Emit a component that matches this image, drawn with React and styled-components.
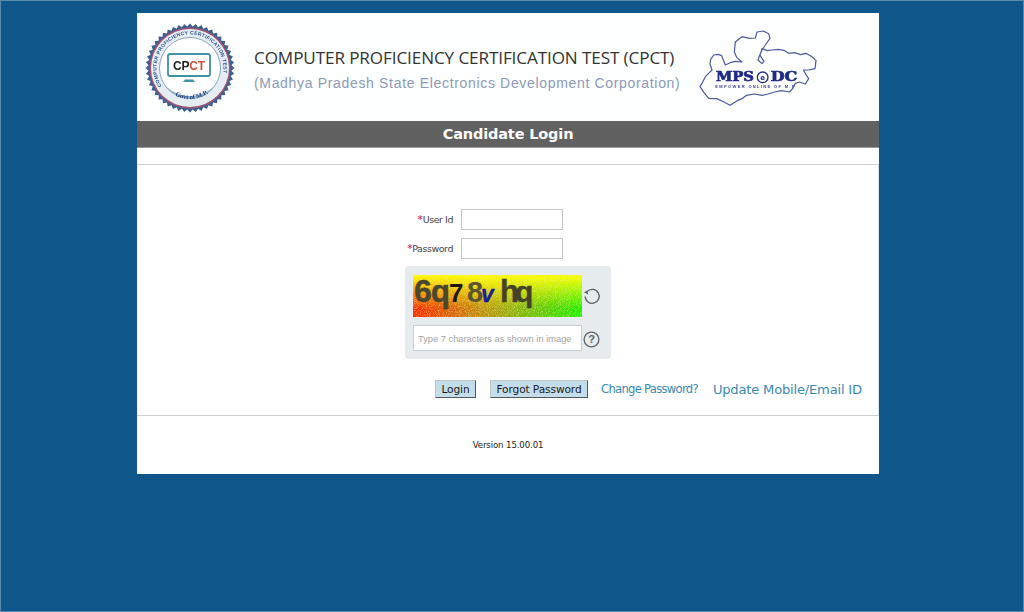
import React from 'react';
import styled, { createGlobalStyle } from 'styled-components';

const GlobalStyle = createGlobalStyle`
    html, body {
        margin: 0;
        padding: 0;
        background: #0f568a;
    }
`;

const Page = styled.div`
    box-sizing: border-box;
    width: 1024px;
    height: 612px;
    padding: 12px 0 0 136px;
    background: #0f568a;
    border: 1px solid #5a8bae;
    overflow: hidden;
`;

const Card = styled.div`
    width: 742px;
    height: 461px;
    background: #fff;
    display: flex;
    flex-direction: column;
`;

const Header = styled.div`
    height: 108px;
    display: flex;
    align-items: flex-start;
    background: #fdfefe;
`;

const SealBox = styled.div`
    box-sizing: border-box;
    width: 117px;
    padding: 10px 0 0 8px;
    filter: blur(0.35px);
`;

const TitleBlock = styled.div`
    width: 426px;
    padding-top: 33px;
`;

const Title = styled.div`
    font-family: "Open Sans", sans-serif;
    font-size: 17.1px;
    line-height: 24px;
    color: #333;
    white-space: nowrap;
    letter-spacing: -0.1px;
`;

const Subtitle = styled.div`
    font-family: "Liberation Sans", sans-serif;
    font-size: 14px;
    line-height: 24px;
    margin-top: 1px;
    color: #8c9ab8;
    white-space: nowrap;
    letter-spacing: 0.67px;
`;

const MapBox = styled.div`
    margin-top: 7px;
    filter: blur(0.35px);
`;

const Band = styled.div`
    height: 27px;
    background: #616161;
    color: #fff;
    font-family: "DejaVu Sans", sans-serif;
    font-weight: 700;
    font-size: 14.5px;
    letter-spacing: -0.15px;
    line-height: 27px;
    text-align: center;
    border-bottom: 1px solid #9a9a9a;
    box-sizing: border-box;
`;

const Divider = styled.div`
    height: ${p => p.$h}px;
    border-bottom: 1px solid #cfd2d2;
    box-sizing: border-box;
`;

const Body = styled.div`
    height: 251px;
    box-sizing: border-box;
    padding-top: 44px;
    border-bottom: 1px solid #cfd2d2;
    border-right: 1px solid #dfe6ea;
`;

const Fields = styled.div`
    display: grid;
    grid-template-columns: 316px 102px;
    column-gap: 8px;
    row-gap: 8px;
    align-items: center;
`;

const Label = styled.label`
    font-family: "DejaVu Sans", sans-serif;
    font-size: 9.5px;
    color: #444;
    text-align: right;
    letter-spacing: -0.45px;
`;

const Star = styled.span`
    color: #c8102e;
    font-size: 11px;
`;

const TextBox = styled.input`
    box-sizing: border-box;
    width: 102px;
    height: 21px;
    border: 1px solid #c3c6c8;
    background: #fff;
    padding: 0 4px;
    outline: none;
`;

const CaptchaPanel = styled.div`
    box-sizing: border-box;
    width: 206px;
    height: 93px;
    margin: 7px 0 0 268px;
    padding: 9px 8px;
    background: #e6ebee;
    border-radius: 4px;
    display: grid;
    grid-template-columns: 169px 22px;
    column-gap: 0;
    row-gap: 8px;
    align-items: center;
`;

const CaptchaField = styled.input`
    box-sizing: border-box;
    width: 169px;
    height: 26px;
    border: 1px solid #c9ced2;
    background: #fff;
    padding: 1px 4px 0;
    font-family: "Liberation Sans", sans-serif;
    font-size: 9.3px;
    outline: none;
    &::placeholder {
        color: #a3a3a3;
        opacity: 1;
    }
`;

const IconCell = styled.div`
    display: flex;
    justify-content: flex-end;
    padding: ${p => p.$top}px ${p => p.$right}px 0 0;
`;

const Actions = styled.div`
    display: flex;
    align-items: center;
    margin: 21px 0 0 298px;
`;

const ActionButton = styled.button`
    box-sizing: border-box;
    height: 18px;
    width: ${p => p.$w}px;
    margin-right: ${p => p.$gap}px;
    padding: 0;
    background: #c3deea;
    border: 1px solid;
    border-color: #c2c6c8 #55595c #55595c #c2c6c8;
    font-family: "DejaVu Sans", sans-serif;
    font-size: 10.6px;
    color: #1a1a1a;
    letter-spacing: -0.1px;
`;

const SmallLink = styled.a`
    font-family: "DejaVu Sans", sans-serif;
    font-size: 11.6px;
    letter-spacing: -0.72px;
    color: #3a8ab4;
    margin-right: 15px;
    white-space: nowrap;
`;

const BigLink = styled.a`
    font-family: "DejaVu Sans", sans-serif;
    font-size: 13.1px;
    letter-spacing: -0.2px;
    color: #3a8ab4;
    white-space: nowrap;
`;

const Footer = styled.div`
    flex: 1;
    display: flex;
    justify-content: center;
    padding-top: 24px;
    font-family: "DejaVu Sans", sans-serif;
    font-size: 8.6px;
    letter-spacing: -0.12px;
    color: #222;
    box-sizing: border-box;
`;

// toothed rim of the round seal
const gearPoints = (cx, cy, outer, inner, teeth) => {
    const pts = [];
    for (let i = 0; i < teeth * 2; i++) {
        const r = i % 2 === 0 ? outer : inner;
        const a = (i * Math.PI) / teeth;
        pts.push(`${(cx + r * Math.cos(a)).toFixed(2)},${(cy + r * Math.sin(a)).toFixed(2)}`);
    }
    return pts.join(' ');
};

const Seal = () => (
    <svg width="90" height="90" viewBox="0 0 90 90" style={{ display: 'block' }}>
        <defs>
            <path id="sealTop" d="M 17.6 64.2 A 33.5 33.5 0 1 1 72.4 64.2" />
            <path id="sealBottom" d="M 24 68 A 31 31 0 0 0 66 68" />
        </defs>
        <polygon points={gearPoints(45, 45, 44.5, 41.5, 48)} fill="#3f5f92" />
        <circle cx="45" cy="45" r="40.5" fill="#9c5570" />
        <circle cx="45" cy="45" r="39" fill="#e6edf2" />
        <circle cx="45" cy="45" r="30.5" fill="#fff" stroke="#6f93b2" strokeWidth="0.8" />
        <path d="M 20 63 A 31 31 0 0 0 70 63 L 63 68 Q 45 78 27 68 Z" fill="#8fb0cf" />
        <text fontFamily="'Liberation Sans', sans-serif" fontWeight="700" fontSize="4.9" fill="#274f8c" letterSpacing="0.35">
            <textPath href="#sealTop" startOffset="1%">COMPUTER PROFICIENCY CERTIFICATION TEST</textPath>
        </text>
        <text fontFamily="'Liberation Serif', serif" fontWeight="700" fontSize="6.5" fill="#1d3f78">
            <textPath href="#sealBottom" startOffset="16%" side="left">Govt of M.P.</textPath>
        </text>
        <rect x="23" y="31" width="42" height="22" rx="2" fill="#fff" stroke="#3f93a6" strokeWidth="1.8" />
        <text x="44" y="46.5" textAnchor="middle" fontFamily="'Liberation Sans', sans-serif" fontWeight="700" fontSize="12" letterSpacing="-0.2">
            <tspan fill="#222">CP</tspan><tspan fill="#c8503c">CT</tspan>
        </text>
        <path d="M 40 56.5 L 48 56.5 L 50 59 L 38 59 Z" fill="#3f93a6" />
    </svg>
);

const MpLogo = () => (
    <svg width="150" height="100" viewBox="0 0 450 300" style={{ display: 'block' }}>
        <path
            d="M60 200 L68 186 L76 170 L88 158 L96 150 L90 132 L92 118 L101 105 L114 103 L125 107 L131 122 L136 135 L150 128 L166 124 L186 126 L170 112 L163 96 L166 66 L178 56 L186 50 L208 55 L226 54 L231 36 L250 33 L266 41 L270 55 L258 72 L246 90 L238 108 L234 120 L246 131 L252 124 L240 106 L246 86 L262 92 L276 90 L294 88 L312 91 L326 100 L344 98 L362 104 L378 100 L396 110 L408 122 L405 146 L386 150 L370 150 L378 164 L386 176 L376 192 L358 186 L346 190 L338 206 L328 216 L304 212 L284 216 L264 222 L246 226 L222 222 L200 226 L186 236 L172 242 L150 256 L132 246 L110 236 L86 235 L72 218 Z"
            fill="none"
            stroke="#4d5aa0"
            strokeWidth="3.6"
            strokeLinejoin="round"
        />
        <text x="108" y="184" textLength="114" lengthAdjust="spacingAndGlyphs" fontFamily="'DejaVu Serif', serif" fontWeight="700" fontSize="38" fill="#1f2a86" stroke="#1f2a86" strokeWidth="2">MPS</text>
        <circle cx="248" cy="172" r="16" fill="#fff" stroke="#1f2a86" strokeWidth="4" />
        <text x="248" y="180" textAnchor="middle" fontFamily="'DejaVu Sans', sans-serif" fontWeight="700" fontSize="21" fill="#1f2a86">e</text>
        <text x="272" y="184" textLength="80" lengthAdjust="spacingAndGlyphs" fontFamily="'DejaVu Serif', serif" fontWeight="700" fontSize="38" fill="#1f2a86" stroke="#1f2a86" strokeWidth="2">DC</text>
        <text x="106" y="203" textLength="238" fontFamily="'Liberation Sans', sans-serif" fontWeight="700" fontSize="12" fill="#3a4190">EMPOWER ONLINE OF M.P</text>
    </svg>
);

const CaptchaImage = () => (
    <svg width="169" height="42" viewBox="0 0 169 42" style={{ display: 'block' }}>
        <defs>
            <linearGradient id="capBase" x1="0" x2="1" y1="0" y2="0">
                <stop offset="0" stopColor="#ff2a00" />
                <stop offset="0.45" stopColor="#b79a10" />
                <stop offset="1" stopColor="#22ee00" />
            </linearGradient>
            <linearGradient id="capTop" x1="0" x2="0" y1="0" y2="1">
                <stop offset="0" stopColor="#ffff00" stopOpacity="1" />
                <stop offset="0.8" stopColor="#ffff00" stopOpacity="0" />
            </linearGradient>
            <filter id="capNoise" x="0" y="0" width="100%" height="100%">
                <feTurbulence type="fractalNoise" baseFrequency="1.1" numOctaves="2" seed="4" />
                <feColorMatrix values="0 0 0 0 0.95  0 0 0 0 0.9  0 0 0 0 0.45  0 0 0 3.4 -1.55" />
            </filter>
        </defs>
        <rect width="169" height="42" fill="url(#capBase)" />
        <rect width="169" height="42" fill="url(#capTop)" />
        <rect width="169" height="42" filter="url(#capNoise)" opacity="0.45" />
        <g fontFamily="'Liberation Sans', sans-serif" fontWeight="700">
            <text x="1" y="27" fontSize="32" fill="#4a4730" stroke="#4a4730" strokeWidth="0.5">6</text>
            <text x="18" y="27" fontSize="31" fill="#4a4730" stroke="#4a4730" strokeWidth="0.5">q</text>
            <text x="36" y="27" fontSize="26" fill="#1c1810">7</text>
            <text x="54" y="27" fontSize="29" fill="#5c5530">8</text>
            <text x="68" y="27" fontSize="23" fontStyle="italic" fill="#1a1aa0" stroke="#1a1aa0" strokeWidth="0.3">v</text>
            <text x="87" y="27" fontSize="31" fill="#46422a" stroke="#46422a" strokeWidth="0.4">h</text>
            <text x="102" y="27" fontSize="30" fill="#46422a" stroke="#46422a" strokeWidth="0.4">q</text>
        </g>
    </svg>
);

const RefreshIcon = () => (
    <svg width="18" height="18" viewBox="0 0 18 18" fill="none" stroke="#5b6064" strokeWidth="1.3" style={{ display: 'block' }}>
        <path d="M4 4.6 A7 7 0 1 1 2.2 9.4" />
        <path d="M1 5.2 L4.4 3.6 L5.2 7.6" fill="#5b6064" stroke="none" />
    </svg>
);

const HelpIcon = () => (
    <svg width="17" height="17" viewBox="0 0 17 17" style={{ display: 'block' }}>
        <circle cx="8.5" cy="8.5" r="7.4" fill="none" stroke="#5f6467" strokeWidth="1.3" />
        <text x="8.5" y="12.4" textAnchor="middle" fontFamily="'Liberation Sans', sans-serif" fontWeight="700" fontSize="11" fill="#5f6467">?</text>
    </svg>
);

const App = () => (
    <Page>
        <GlobalStyle />
        <Card>
            <Header>
                <SealBox><Seal /></SealBox>
                <TitleBlock>
                    <Title>COMPUTER PROFICIENCY CERTIFICATION TEST (CPCT)</Title>
                    <Subtitle>(Madhya Pradesh State Electronics Development Corporation)</Subtitle>
                </TitleBlock>
                <MapBox><MpLogo /></MapBox>
            </Header>
            <Band>Candidate Login</Band>
            <Divider $h={17} />
            <Body>
                <Fields>
                    <Label><Star>*</Star>User Id</Label>
                    <TextBox />
                    <Label><Star>*</Star>Password</Label>
                    <TextBox type="password" />
                </Fields>
                <CaptchaPanel>
                    <CaptchaImage />
                    <IconCell $top={0} $right={3}><RefreshIcon /></IconCell>
                    <CaptchaField placeholder="Type 7 characters as shown in image" />
                    <IconCell $top={2} $right={4}><HelpIcon /></IconCell>
                </CaptchaPanel>
                <Actions>
                    <ActionButton $w={41} $gap={14}>Login</ActionButton>
                    <ActionButton $w={98} $gap={13}>Forgot Password</ActionButton>
                    <SmallLink>Change Password?</SmallLink>
                    <BigLink>Update Mobile/Email ID</BigLink>
                </Actions>
            </Body>
            <Footer>Version 15.00.01</Footer>
        </Card>
    </Page>
);

export default App;
